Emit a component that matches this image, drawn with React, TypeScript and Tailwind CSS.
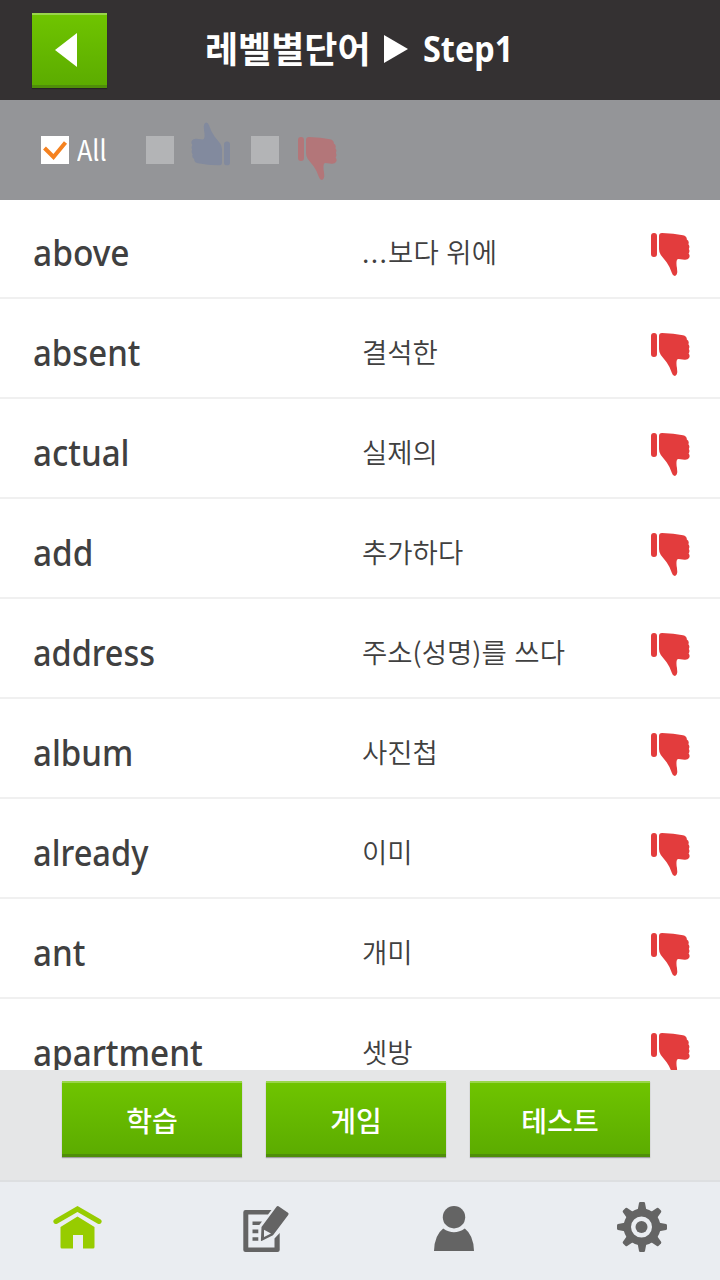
type Word = { term: string; meaning: string; fit: string };

const WORDS: Word[] = [
  { term: "above", meaning: "...보다 위에", fit: "scale-x-[0.905]" },
  { term: "absent", meaning: "결석한", fit: "scale-x-[0.89]" },
  { term: "actual", meaning: "실제의", fit: "scale-x-[0.895]" },
  { term: "add", meaning: "추가하다", fit: "scale-x-[0.9]" },
  { term: "address", meaning: "주소(성명)를 쓰다", fit: "scale-x-[0.877]" },
  { term: "album", meaning: "사진첩", fit: "scale-x-[0.893]" },
  { term: "already", meaning: "이미", fit: "scale-x-[0.882]" },
  { term: "ant", meaning: "개미", fit: "scale-x-[0.895]" },
  { term: "apartment", meaning: "셋방", fit: "scale-x-[0.9]" },
];

function Thumb({ className }: { className: string }) {
  return (
    <svg viewBox="0 0 39 43.5" fill="currentColor" className={`h-[43.5px] w-[39px] shrink-0 ${className}`}>
      <rect x="0" y="0" width="6" height="24" rx="2.9" />
      <path d="M11 0Q23 .4 32 2.2Q36 3.2 35.8 6.4Q38.600 8 37.400 11.200Q39.200 13.500 37.800 15.900Q39.200 18.200 37.600 20.500Q39.400 22.700 38 25Q36.800 27 33.500 26.700L27.500 25.900Q25.800 25.900 25.600 28Q25.200 31.500 25.900 34.500L26.300 39Q25.900 42.500 23.800 43Q21.800 42.900 21 40.200Q19 34 15.600 29.300L9.800 22Q8 19.500 8 16V3Q8 .1 11 0Z" />
    </svg>
  );
}

function GreenButton({ className, children }: { className: string; children: React.ReactNode }) {
  return (
    <button
      className={`flex shrink-0 items-center justify-center border-t-2 border-b-[3px] border-t-[#99d54b] border-b-[#4f8e09] bg-linear-to-b from-[#6fc400] to-[#5cac00] text-white shadow-[0_1px_1px_rgba(0,0,0,0.3)] ${className}`}
    >
      {children}
    </button>
  );
}

function HomeIcon() {
  return (
    <svg viewBox="0 0 50 50" className="ml-px h-[50px] w-[50px]" fill="#97cc00">
      <path d="M2.900 18.500L24.500 6L46.100 18.500" fill="none" stroke="#97cc00" strokeWidth="5" strokeLinecap="round" strokeLinejoin="miter" />
      <path d="M7.500 24L24.500 13.600L41.500 24V44Q41.500 45.500 40 45.500H30V32H20V45.500H9Q7.500 45.500 7.500 44Z" />
    </svg>
  );
}

function NoteIcon() {
  return (
    <svg viewBox="0 0 50 50" className="h-[50px] w-[50px]" fill="#646464">
      <path d="M30.500 7H4.500Q2.300 7 2.300 9.200V47Q2.300 49 4.500 49H36.500Q38.700 49 38.700 47V30L33.500 35.500V44.500H7.300V11.500H27Z" />
      <path d="M11.500 18.500H21L18.300 22H11.500ZM11.500 26.500H17.300V30.200H11.500ZM11.500 34.200H17.300V37.800H11.500Z" />
      <path fillRule="evenodd" d="M37.500 3.200L47 9.800Q48.200 10.600 47.200 12L32 32.300L20.500 38Q19.800 38.200 19.900 37.200L20.500 24L35.500 3.800Q36.400 2.600 37.500 3.200ZM23 26.800V34L30 30.600Z" />
    </svg>
  );
}

function UserIcon() {
  return (
    <svg viewBox="0 0 50 50" className="h-[50px] w-[50px]" fill="#646464">
      <circle cx="25" cy="14.200" r="11.200" />
      <path d="M14.200 25.500Q25 33 35.800 25.500Q44.500 32 45 48H5Q5.500 32 14.200 25.500Z" />
    </svg>
  );
}

const TEETH = [0, 45, 90, 135, 180, 225, 270, 315];

function GearIcon() {
  return (
    <svg viewBox="0 0 50 50" className="-mt-px h-[50px] w-[50px]" fill="#646464">
      {TEETH.map((angle) => (
        <path key={angle} d="M20.500 9L22 1Q22.200 0 23.200 0H26.800Q27.800 0 28 1L29.500 9Z" transform={`rotate(${angle} 25 25)`} />
      ))}
      <path fillRule="evenodd" d="M25 6.500A18.500 18.500 0 1 1 25 43.500A18.500 18.500 0 1 1 25 6.500ZM24.500 14.500A10.500 10.500 0 1 0 24.500 35.500A10.500 10.500 0 1 0 24.500 14.500Z" />
      <circle cx="24.500" cy="25" r="6" />
    </svg>
  );
}

export default function App() {
  return (
    <div className="flex h-[1280px] w-[720px] flex-col overflow-hidden bg-white font-['Noto_Sans','Noto_Sans_CJK_KR',sans-serif]">
      <header className="flex h-[100px] shrink-0 bg-[#343132] pt-[13px] pl-8 text-white">
        <GreenButton className="h-[75px] w-[75px] pr-2">
          <svg viewBox="0 0 22 34" className="h-[34px] w-[22px]" fill="white">
            <path d="M22 0V34L0 17Z" />
          </svg>
        </GreenButton>
        <h1 className="ml-[98px] flex h-[72px] items-center whitespace-nowrap font-bold">
          <span className="mb-1 block w-[165px] font-['Noto_Sans_CJK_KR',sans-serif] text-[36px] leading-none">레벨별단어</span>
          <svg viewBox="0 0 24 28" className="ml-[14px] h-7 w-6" fill="white">
            <path d="M0 0L24 14L0 28Z" />
          </svg>
          <span className="ml-[15px] block origin-left scale-x-90 text-[36px] leading-none">Step1</span>
        </h1>
      </header>

      <div className="flex h-[100px] shrink-0 items-center bg-[#949598] pl-[41px] text-white">
        <span className="flex size-7 items-center justify-center bg-white">
          <svg viewBox="0 0 28 28" className="size-7" fill="none" stroke="#f58220" strokeWidth="4">
            <path d="M3.500 12L12.500 21L24.500 6.500" />
          </svg>
        </span>
        <span className="mb-0.5 ml-2 w-[29px] origin-left scale-x-[0.9] font-['Noto_Sans_CJK_KR',sans-serif] text-[28px] leading-7">All</span>
        <span className="ml-[40px] size-7 bg-[#b3b4b6]" />
        <Thumb className="mb-3 ml-[17px] rotate-180 text-[#828a9e]" />
        <span className="ml-[21px] size-7 bg-[#b3b4b6]" />
        <Thumb className="mt-[18px] ml-[19px] text-[#b37679]" />
      </div>

      <main className="h-[870px] shrink-0 overflow-hidden bg-white text-[#404040]">
        {WORDS.map(({ term, meaning, fit }) => (
          <div key={term} className="h-[100px]">
            <div className="flex h-[97px] items-center shadow-[0_2px_0_#f0f0f0]">
              <span className="ml-[33px] w-[329px] shrink-0">
                <span className={`inline-block origin-left pt-[7px] text-[37px] leading-[50px] font-medium ${fit}`}>{term}</span>
              </span>
              <span className="w-[289px] shrink-0 whitespace-nowrap pt-[5px] font-['Noto_Sans_CJK_KR',sans-serif] text-[27.500px] leading-10 font-[350] [word-spacing:1.5px]">
                {meaning.startsWith("...") ? (
                  <>
                    <span className="tracking-[1.3px]">...</span>
                    {meaning.slice(3)}
                  </>
                ) : (
                  meaning
                )}
              </span>
              <Thumb className="mt-[13px] text-[#e33c3d]" />
            </div>
          </div>
        ))}
      </main>

      <section className="flex h-[110px] shrink-0 gap-6 bg-[#e5e6e7] pt-[11px] pl-[62px] font-['Noto_Sans_CJK_KR',sans-serif] text-[28px] font-medium">
        <GreenButton className="h-[76px] w-[180px] pt-0.5">학습</GreenButton>
        <GreenButton className="h-[76px] w-[180px] pt-0.5">게임</GreenButton>
        <GreenButton className="h-[76px] w-[180px] pt-0.5">테스트</GreenButton>
      </section>

      <nav className="flex h-[100px] shrink-0 items-start justify-between border-t-2 border-[#dddfe1] bg-[#eaedf1] pt-[21px] pr-[53px] pl-[52px]">
        <HomeIcon />
        <NoteIcon />
        <UserIcon />
        <GearIcon />
      </nav>
    </div>
  );
}
